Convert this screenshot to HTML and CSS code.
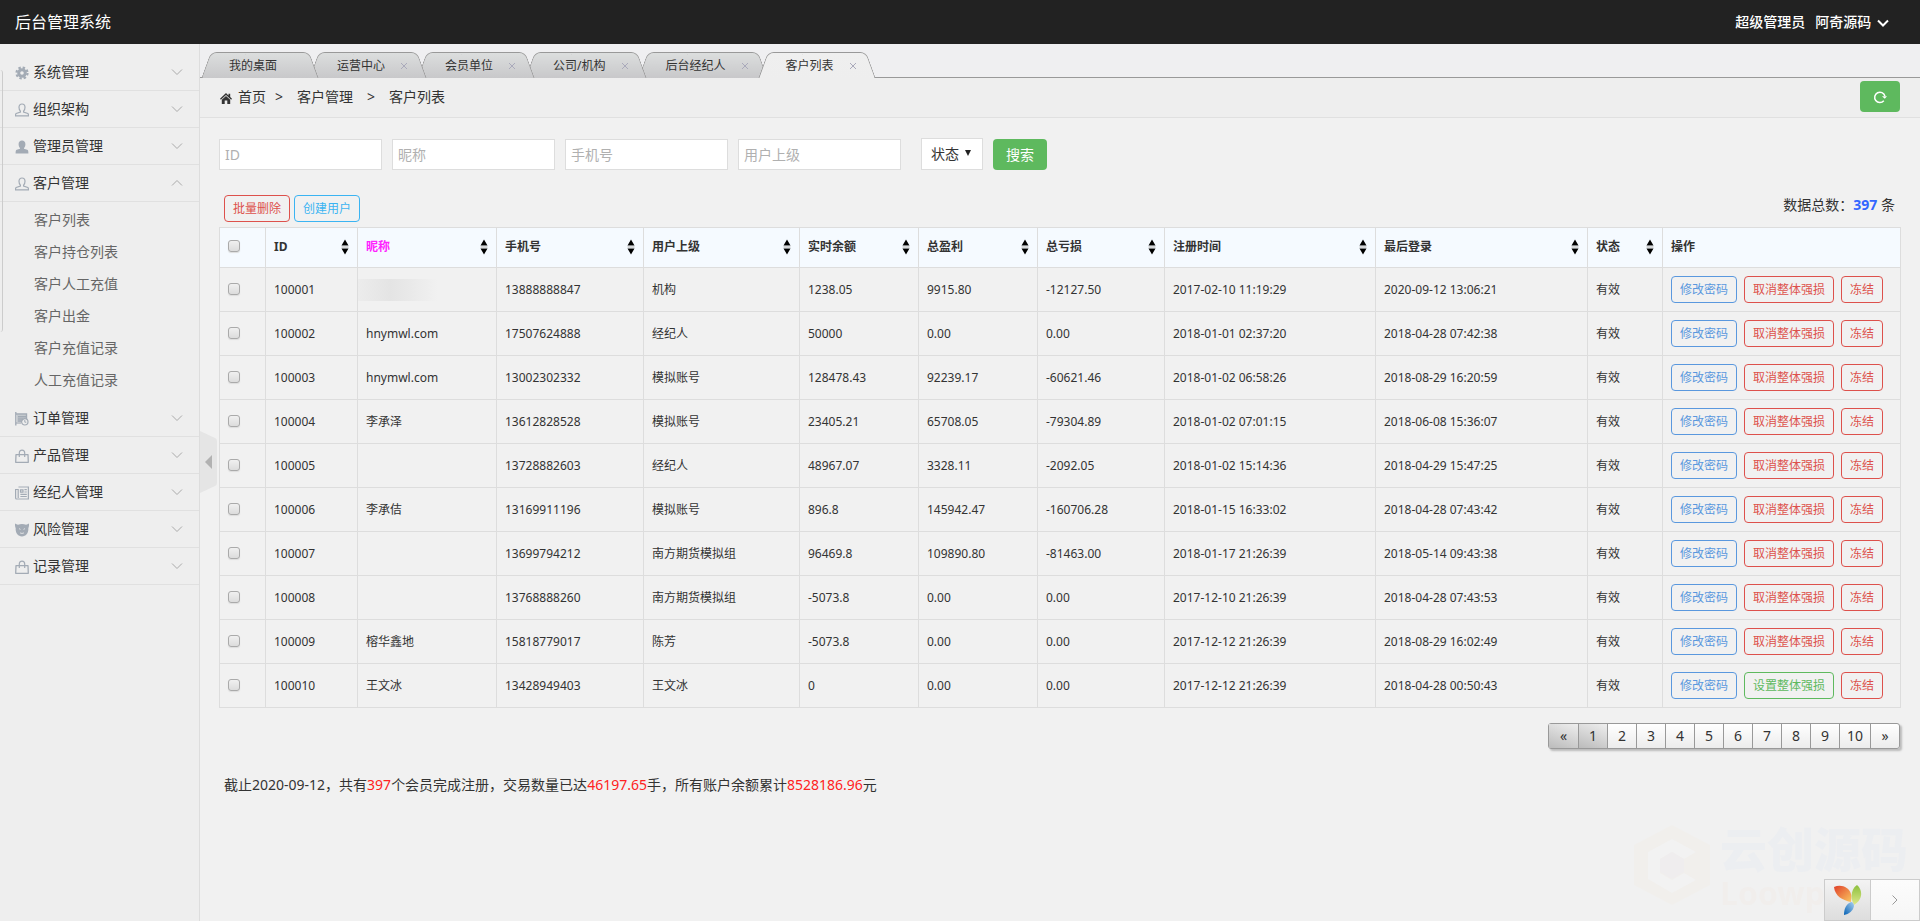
FILE: index.html
```html
<!DOCTYPE html>
<html lang="zh-CN">
<head>
<meta charset="utf-8">
<title>后台管理系统</title>
<link rel="stylesheet" href="styles.css">
</head>
<body>
<svg class="defs" aria-hidden="true">
  <defs>
    <linearGradient id="g-red" x1="0" y1="0" x2="1" y2="1"><stop offset="0" stop-color="#e0402a"/><stop offset="1" stop-color="#fbc860"/></linearGradient>
    <linearGradient id="g-green" x1="0" y1="0" x2="0" y2="1"><stop offset="0" stop-color="#8cc03c"/><stop offset="1" stop-color="#dfe88c"/></linearGradient>
    <linearGradient id="g-blue" x1="1" y1="0" x2="0" y2="1"><stop offset="0" stop-color="#a9d0f0"/><stop offset="1" stop-color="#0561b4"/></linearGradient>
  </defs>
  <symbol id="down" viewBox="0 0 12 8"><path d="M1 1.5 6 6.5 11 1.5" fill="none" stroke="currentColor"/></symbol>
  <symbol id="up" viewBox="0 0 12 8"><path d="M1 6.5 6 1.5 11 6.5" fill="none" stroke="currentColor"/></symbol>
  <symbol id="gear" viewBox="0 0 14 14"><circle cx="7" cy="7" r="3.3" fill="none" stroke="currentColor" stroke-width="3"/><circle cx="7" cy="7" r="5.5" fill="none" stroke="currentColor" stroke-width="2.2" stroke-dasharray="2.4 1.92"/></symbol>
  <symbol id="user-o" viewBox="0 0 14 14"><path d="M5.4 8.2C4.300 7 4 5.800 4 4.200 4 2.200 5.200 1 7 1s3 1.200 3 3.200c0 1.600-.3 2.800-1.400 4v.8l4.200 1.500c.5.300.7.900.7 2.300H.5c0-1.400.2-2 .7-2.300L5.400 9z" fill="none" stroke="currentColor" stroke-width="1.200"/></symbol>
  <symbol id="user" viewBox="0 0 14 14"><path d="M5 8C4 7 3.600 5.600 3.600 4 3.600 1.800 5 .5 7 .5s3.400 1.300 3.400 3.500c0 1.600-.4 3-1.400 4v.7l3.200 1.100c.9.300 1.200 1.200 1.200 3.700H.6c0-2.500.3-3.400 1.200-3.700L5 8.700z" fill="currentColor"/></symbol>
  <symbol id="order" viewBox="0 0 14 14"><path d="M.8 0v13.500M1 2h10.500v5M3 4.700h8M3 7h5M3 9h3.500" fill="none" stroke="currentColor" stroke-width="1.400"/><path d="M2 2.500h9V6L6 10H2z" fill="currentColor" opacity=".55"/><path d="M1 11h5" stroke="currentColor" stroke-width="1.200"/><circle cx="9.800" cy="9.800" r="3.200" fill="none" stroke="currentColor" stroke-width="1.200"/><path d="M9.800 8v2.200h1.500" fill="none" stroke="currentColor"/></symbol>
  <symbol id="bag" viewBox="0 0 14 14"><path d="M1 5.600h12L13.300 13.300H.7z" fill="none" stroke="currentColor" stroke-width="1.300" stroke-linejoin="round"/><path d="M4.300 8V4c0-3.900 5.400-3.900 5.400 0v4" fill="none" stroke="currentColor" stroke-width="1.200"/></symbol>
  <symbol id="news" viewBox="0 0 14 14"><path d="M3.500 1h9.900v12H1.600C.9 13 .6 12.600.6 12V3.500h2.600V12" fill="none" stroke="currentColor" stroke-width="1.200"/><path d="M5.500 3.800h2.500v2.400H5.500zM9.400 3.700h2.400M9.400 6h2.400M5.400 8.300h6.400M5.400 10.500h6.400" fill="none" stroke="currentColor" stroke-width="1.200"/></symbol>
  <symbol id="demon" viewBox="0 0 14 14"><path d="M0 .5c1 .3 2 1 3 1.200 2.500-.8 5.500-.8 8 0 1-.2 2-.9 3-1.200.2 2-.1 3.700-.7 4.800.5 4-2 8.200-6.300 8.200S.2 9.300.7 5.300C.1 4.200-.2 2.500 0 .5z" fill="currentColor"/><path d="M4 5.600 5.500 6.400M10 5.600 8.500 6.400M5 9.800c1.200.8 2.800.8 4 0" fill="none" stroke="#eee" stroke-width=".8"/></symbol>
  <symbol id="sort" viewBox="0 0 8 16"><path d="M4 .5 7.500 6.500h-7zM.5 9.500h7L4 15.500z" fill="#000"/><path d="M.5 7.300h7M.5 8.700h7" stroke="#bbb" stroke-width=".7"/></symbol>
  <symbol id="close" viewBox="0 0 8 8"><path d="m1 1 6 6M7 1 1 7" fill="none" stroke="currentColor"/></symbol>
</svg>

<header class="topbar">
  <h1 class="brand">后台管理系统</h1>
  <div class="account"><span>超级管理员</span><a href="#">阿奇源码 <svg class="chev"><use href="#down"/></svg></a></div>
</header>

<div class="shell">
  <aside class="sidebar">
    <div class="edge"></div>
    <nav class="menu">
      <button class="item" type="button"><svg class="ico"><use href="#gear"/></svg><span>系统管理</span><svg class="chev"><use href="#down"/></svg></button>
      <button class="item" type="button"><svg class="ico"><use href="#user-o"/></svg><span>组织架构</span><svg class="chev"><use href="#down"/></svg></button>
      <button class="item" type="button"><svg class="ico"><use href="#user"/></svg><span>管理员管理</span><svg class="chev"><use href="#down"/></svg></button>
      <button class="item" type="button"><svg class="ico"><use href="#user-o"/></svg><span>客户管理</span><svg class="chev"><use href="#up"/></svg></button>
      <div class="submenu">
        <a href="#">客户列表</a>
        <a href="#">客户持仓列表</a>
        <a href="#">客户人工充值</a>
        <a href="#">客户出金</a>
        <a href="#">客户充值记录</a>
        <a href="#">人工充值记录</a>
      </div>
      <button class="item" type="button"><svg class="ico"><use href="#order"/></svg><span>订单管理</span><svg class="chev"><use href="#down"/></svg></button>
      <button class="item" type="button"><svg class="ico"><use href="#bag"/></svg><span>产品管理</span><svg class="chev"><use href="#down"/></svg></button>
      <button class="item" type="button"><svg class="ico"><use href="#news"/></svg><span>经纪人管理</span><svg class="chev"><use href="#down"/></svg></button>
      <button class="item" type="button"><svg class="ico"><use href="#demon"/></svg><span>风险管理</span><svg class="chev"><use href="#down"/></svg></button>
      <button class="item" type="button"><svg class="ico"><use href="#bag"/></svg><span>记录管理</span><svg class="chev"><use href="#down"/></svg></button>
    </nav>
    <button class="collapse" type="button" aria-label="收起菜单"><svg viewBox="0 0 18 62"><path d="M0 0 15 7q2 1 2 3v42q0 2-2 3L0 62z" fill="#e5e5e5"/><path d="M12 24v14l-7-7z" fill="#b2b2b2"/></svg></button>
  </aside>

  <main class="main">
    <ul class="tabs">
      <li class="tab t1"><span>我的桌面</span></li>
      <li class="tab t2"><span>运营中心</span><svg class="x"><use href="#close"/></svg></li>
      <li class="tab t3"><span>会员单位</span><svg class="x"><use href="#close"/></svg></li>
      <li class="tab t4"><span>公司/机构</span><svg class="x"><use href="#close"/></svg></li>
      <li class="tab t5"><span>后台经纪人</span><svg class="x"><use href="#close"/></svg></li>
      <li class="tab active"><span>客户列表</span><svg class="x"><use href="#close"/></svg></li>
    </ul>

    <nav class="crumbs">
      <svg class="home" viewBox="0 0 12 12"><path d="M0 6.800 6 1l2.500 2.400V1.800h1.700v3.300L12 6.800l-.9.900L6 3 .9 7.700z" fill="#333"/><path d="M1.800 7.800 6 4l4.200 3.800V12H7.300V8.500H4.700V12H1.800z" fill="#333"/></svg>
      <a href="#">首页</a><span class="gt">&gt;</span><span>客户管理</span><span class="gt wide">&gt;</span><span>客户列表</span>
      <button class="refresh" type="button" aria-label="刷新"><svg viewBox="0 0 14 14"><path d="M10.800 10.800A5.200 5.200 0 1 1 11.900 6" fill="none" stroke="#fff" stroke-width="1.500"/><path d="M9 6.200h5L11.800 8.800z" fill="#fff"/></svg></button>
    </nav>

    <section class="content">
      <form class="search">
        <input type="text" placeholder="ID" aria-label="ID">
        <input type="text" placeholder="昵称" aria-label="昵称">
        <input type="text" placeholder="手机号" aria-label="手机号">
        <input type="text" placeholder="用户上级" aria-label="用户上级">
        <span class="pick"><select aria-label="状态"><option>状态</option></select><svg viewBox="0 0 6 6"><path d="M0 0h6L3 6z" fill="#222"/></svg></span>
        <button class="go" type="button">搜索</button>
      </form>

      <div class="bar">
        <button class="btn red" type="button">批量删除</button>
        <button class="btn sky" type="button">创建用户</button>
        <span class="total">数据总数：<strong>397</strong> 条</span>
      </div>

      <table class="grid">
        <colgroup><col class="c-chk"><col class="c-id"><col class="c-nick"><col class="c-tel"><col class="c-up"><col class="c-bal"><col class="c-bal"><col class="c-loss"><col class="c-time"><col class="c-last"><col class="c-st"><col class="c-op"></colgroup>
        <thead>
          <tr>
            <th><input type="checkbox" aria-label="全选"></th>
            <th><div>ID<svg><use href="#sort"/></svg></div></th>
            <th class="pink"><div>昵称<svg><use href="#sort"/></svg></div></th>
            <th><div>手机号<svg><use href="#sort"/></svg></div></th>
            <th><div>用户上级<svg><use href="#sort"/></svg></div></th>
            <th><div>实时余额<svg><use href="#sort"/></svg></div></th>
            <th><div>总盈利<svg><use href="#sort"/></svg></div></th>
            <th><div>总亏损<svg><use href="#sort"/></svg></div></th>
            <th><div>注册时间<svg><use href="#sort"/></svg></div></th>
            <th><div>最后登录<svg><use href="#sort"/></svg></div></th>
            <th><div>状态<svg><use href="#sort"/></svg></div></th>
            <th>操作</th>
          </tr>
        </thead>
        <tbody>
          <tr><td><input type="checkbox" aria-label="100001"></td><td>100001</td><td class="masked"><div></div></td><td>13888888847</td><td>机构</td><td>1238.05</td><td>9915.80</td><td>-12127.50</td><td>2017-02-10 11:19:29</td><td>2020-09-12 13:06:21</td><td>有效</td><td><div class="ops"><button class="btn blue" type="button">修改密码</button><button class="btn red" type="button">取消整体强损</button><button class="btn red" type="button">冻结</button></div></td></tr>
          <tr><td><input type="checkbox" aria-label="100002"></td><td>100002</td><td>hnymwl.com</td><td>17507624888</td><td>经纪人</td><td>50000</td><td>0.00</td><td>0.00</td><td>2018-01-01 02:37:20</td><td>2018-04-28 07:42:38</td><td>有效</td><td><div class="ops"><button class="btn blue" type="button">修改密码</button><button class="btn red" type="button">取消整体强损</button><button class="btn red" type="button">冻结</button></div></td></tr>
          <tr><td><input type="checkbox" aria-label="100003"></td><td>100003</td><td>hnymwl.com</td><td>13002302332</td><td>模拟账号</td><td>128478.43</td><td>92239.17</td><td>-60621.46</td><td>2018-01-02 06:58:26</td><td>2018-08-29 16:20:59</td><td>有效</td><td><div class="ops"><button class="btn blue" type="button">修改密码</button><button class="btn red" type="button">取消整体强损</button><button class="btn red" type="button">冻结</button></div></td></tr>
          <tr><td><input type="checkbox" aria-label="100004"></td><td>100004</td><td>李承泽</td><td>13612828528</td><td>模拟账号</td><td>23405.21</td><td>65708.05</td><td>-79304.89</td><td>2018-01-02 07:01:15</td><td>2018-06-08 15:36:07</td><td>有效</td><td><div class="ops"><button class="btn blue" type="button">修改密码</button><button class="btn red" type="button">取消整体强损</button><button class="btn red" type="button">冻结</button></div></td></tr>
          <tr><td><input type="checkbox" aria-label="100005"></td><td>100005</td><td></td><td>13728882603</td><td>经纪人</td><td>48967.07</td><td>3328.11</td><td>-2092.05</td><td>2018-01-02 15:14:36</td><td>2018-04-29 15:47:25</td><td>有效</td><td><div class="ops"><button class="btn blue" type="button">修改密码</button><button class="btn red" type="button">取消整体强损</button><button class="btn red" type="button">冻结</button></div></td></tr>
          <tr><td><input type="checkbox" aria-label="100006"></td><td>100006</td><td>李承佶</td><td>13169911196</td><td>模拟账号</td><td>896.8</td><td>145942.47</td><td>-160706.28</td><td>2018-01-15 16:33:02</td><td>2018-04-28 07:43:42</td><td>有效</td><td><div class="ops"><button class="btn blue" type="button">修改密码</button><button class="btn red" type="button">取消整体强损</button><button class="btn red" type="button">冻结</button></div></td></tr>
          <tr><td><input type="checkbox" aria-label="100007"></td><td>100007</td><td></td><td>13699794212</td><td>南方期货模拟组</td><td>96469.8</td><td>109890.80</td><td>-81463.00</td><td>2018-01-17 21:26:39</td><td>2018-05-14 09:43:38</td><td>有效</td><td><div class="ops"><button class="btn blue" type="button">修改密码</button><button class="btn red" type="button">取消整体强损</button><button class="btn red" type="button">冻结</button></div></td></tr>
          <tr><td><input type="checkbox" aria-label="100008"></td><td>100008</td><td></td><td>13768888260</td><td>南方期货模拟组</td><td>-5073.8</td><td>0.00</td><td>0.00</td><td>2017-12-10 21:26:39</td><td>2018-04-28 07:43:53</td><td>有效</td><td><div class="ops"><button class="btn blue" type="button">修改密码</button><button class="btn red" type="button">取消整体强损</button><button class="btn red" type="button">冻结</button></div></td></tr>
          <tr><td><input type="checkbox" aria-label="100009"></td><td>100009</td><td>榕华鑫地</td><td>15818779017</td><td>陈芳</td><td>-5073.8</td><td>0.00</td><td>0.00</td><td>2017-12-12 21:26:39</td><td>2018-08-29 16:02:49</td><td>有效</td><td><div class="ops"><button class="btn blue" type="button">修改密码</button><button class="btn red" type="button">取消整体强损</button><button class="btn red" type="button">冻结</button></div></td></tr>
          <tr><td><input type="checkbox" aria-label="100010"></td><td>100010</td><td>王文冰</td><td>13428949403</td><td>王文冰</td><td>0</td><td>0.00</td><td>0.00</td><td>2017-12-12 21:26:39</td><td>2018-04-28 00:50:43</td><td>有效</td><td><div class="ops"><button class="btn blue" type="button">修改密码</button><button class="btn green" type="button">设置整体强损</button><button class="btn red" type="button">冻结</button></div></td></tr>
        </tbody>
      </table>

      <nav class="pages" aria-label="分页">
        <a class="off" href="#">«</a><a class="off" href="#">1</a><a href="#">2</a><a href="#">3</a><a href="#">4</a><a href="#">5</a><a href="#">6</a><a href="#">7</a><a href="#">8</a><a href="#">9</a><a href="#">10</a><a href="#">»</a>
      </nav>

      <p class="summary">截止2020-09-12，共有<em>397</em>个会员完成注册，交易数量已达<em>46197.65</em>手，所有账户余额累计<em>8528186.96</em>元</p>
    </section>
  </main>
</div>

<div class="mark" aria-hidden="true">
  <svg viewBox="0 0 76 80"><path d="M38 0 76 20v40L38 80 0 60V20z" fill="#f1efec"/><path d="M38 14 62 27 50 34 38 27 26 34v14l12 7 12-7 12 7-24 13L14 54V27z" fill="#f2f2f2"/><path d="M38 27l12 7v13l-12 7-12-7V34z" fill="#efedee"/></svg>
  <div><b>云创源码</b><i>Loowp.com</i></div>
</div>

<div class="debug">
  <a class="logo" href="#" aria-label="Yii"><svg viewBox="0 0 28 30"><path d="M0 2C7-1 15 2 17 9c1 3 0 6 0 8C8 15 1 11 0 2z" fill="url(#g-red)"/><path d="M23 0c6 5 6 15-3 20-4-7-3-16 3-20z" fill="url(#g-green)"/><path d="M17 17c2 0 3 2 3 4-1 5-5 8-10 9 0-6 2-11 7-13z" fill="url(#g-blue)"/></svg></a>
  <button type="button" aria-label="展开"><svg viewBox="0 0 6 10"><path d="M.5.500 5 5 .5 9.500" fill="none" stroke="#999"/></svg></button>
</div>
</body>
</html>
```

FILE: styles.css
```css
* { box-sizing: border-box; }

body {
  margin: 0;
  min-height: 100vh;
  display: flex;
  flex-direction: column;
  background: #f1f1f1;
  color: #333;
  font: 14px/20px "Noto Sans", "Noto Sans CJK SC", sans-serif;
}

a { color: inherit; text-decoration: none; }
button { font: inherit; cursor: pointer; }
.defs { position: absolute; width: 0; height: 0; }
.chev { width: 12px; height: 8px; }

.topbar {
  height: 44px;
  padding: 0 31px 0 15px;
  display: flex;
  align-items: center;
  justify-content: space-between;
  background: #222;
  color: #fff;
}
.brand { margin: 0; font-size: 16px; font-weight: 400; }
.account { display: flex; gap: 10px; font-weight: 500; }
.account .chev { stroke-width: 2; margin-left: 2px; }

.shell { flex: 1; display: flex; }

.sidebar {
  position: relative;
  flex: 0 0 200px;
  padding-top: 10px;
  background: #eee;
  border-right: 1px solid #ddd;
}
.edge {
  position: absolute;
  left: 0;
  top: 26px;
  width: 3px;
  height: 262px;
  border-right: 1px solid #ccc;
  border-radius: 0 4px 4px 0;
}
.menu { display: flex; flex-direction: column; }
.item {
  height: 37px;
  padding: 0 16px 1px 15px;
  display: flex;
  align-items: center;
  border: 0;
  border-bottom: 1px solid #e0e0e0;
  background: none;
  color: #333;
  text-align: left;
}
.item span { flex: 1; padding-left: 4px; }
.item .ico { width: 14px; height: 14px; margin-top: 3px; color: #a3abb5; }
.item .chev { color: #aaa; }
.submenu { padding: 2px 0 4px; color: #666; }
.submenu a { display: block; padding-left: 34px; line-height: 32px; }

.collapse {
  position: absolute;
  left: 200px;
  top: 387px;
  width: 18px;
  height: 62px;
  padding: 0;
  border: 0;
  background: none;
}
.collapse svg { display: block; width: 18px; height: 62px; }

.main { flex: 1; min-width: 0; }

/* Trapezoid tabs: each half is a skewed pseudo-element */
.tabs {
  position: relative;
  margin: 0;
  padding: 8px 0 0 6px;
  height: 34px;
  display: flex;
  list-style: none;
  font-size: 12px;
  background: #efeff1;
  border-bottom: 1px solid #999;
}
.tab {
  position: relative;
  z-index: 1;
  height: 26px;
  padding: 2px 13px 0 23px;
  display: flex;
  align-items: center;
  gap: 15px;
  flex: none;
}
.tab::before, .tab::after {
  content: "";
  position: absolute;
  z-index: -1;
  top: 0;
  bottom: 0;
  border-top: 1px solid #999;
  background: linear-gradient(#dcdede, #c8c8ca);
}
.tab::before { left: 0; right: 40%; border-left: 1px solid #999; border-radius: 6px 0 0 0; transform: skewX(-20deg); }
.tab::after { left: 40%; right: 0; border-right: 1px solid #999; border-radius: 0 6px 0 0; transform: skewX(20deg); }
.tab .x { width: 8px; height: 8px; color: #aab; margin-right: 1px; }
.t1 { z-index: 6; padding-right: 37px; }
.t2 { z-index: 5; }
.t3 { z-index: 4; }
.t4 { z-index: 3; }
.t5 { z-index: 2; }
.tab.active { z-index: 7; }
.tab.active::before, .tab.active::after { background: linear-gradient(#efefef, #eee); }

.crumbs {
  height: 40px;
  padding: 0 20px 2px 19px;
  display: flex;
  align-items: center;
  background: #eee;
  border-bottom: 1px solid #e0e0e0;
}
.home { width: 12px; height: 12px; margin: 3px 6px 0 1px; }
.gt { margin: 0 14px 0 9px; }
.gt.wide { margin-left: 14px; }
.refresh {
  margin-left: auto;
  width: 40px;
  height: 31px;
  border: 0;
  border-radius: 4px;
  background: #5eb95e;
  display: grid;
  place-items: center;
}
.refresh svg { width: 14px; height: 14px; }

.content { padding: 20px 20px 20px 19px; }

.search { display: flex; align-items: flex-end; gap: 10px; }
.search input {
  width: 163px;
  height: 31px;
  padding: 0 5px 1px;
  border: 1px solid #ddd;
  background: #fff;
  font: inherit;
}
.search input::placeholder { color: #b0b0b0; }
.pick { position: relative; margin-left: 10px; }
.pick select {
  display: block;
  width: 62px;
  height: 32px;
  padding: 0 9px;
  border: 1px solid #ddd;
  border-radius: 0;
  background: #fff;
  color: #333;
  font: inherit;
  appearance: none;
}
.pick svg { position: absolute; right: 12px; top: 12px; width: 6px; height: 6px; pointer-events: none; }
.go { width: 54px; height: 31px; padding: 0; border: 0; border-radius: 4px; background: #5eb95e; color: #fff; }

.bar { display: flex; align-items: flex-start; gap: 4px; padding: 25px 5px 5px; }
.total { margin-left: auto; }
.total strong { color: #36f; }

.btn {
  height: 27px;
  padding: 0 8px;
  border: 1px solid;
  border-radius: 4px;
  background: none;
  font-size: 12px;
  line-height: 18px;
}
.red { color: #dd514c; }
.sky { color: #3bb4f2; }
.blue { color: #5a98de; }
.green { color: #5eb95e; }

.grid {
  width: 100%;
  table-layout: fixed;
  border-collapse: collapse;
  font-size: 12px;
  line-height: 20px;
}
.c-chk { width: 46px; }
.c-id { width: 92px; }
.c-nick { width: 139px; }
.c-tel { width: 147px; }
.c-up { width: 156px; }
.c-bal { width: 119px; }
.c-loss { width: 127px; }
.c-time { width: 211px; }
.c-last { width: 212px; }
.c-st { width: 75px; }
.c-op { width: 238px; }
.grid th, .grid td {
  height: 44px;
  padding: 0 8px;
  border: 1px solid #ddd;
  text-align: left;
  white-space: nowrap;
}
.grid th { height: 40px; padding-bottom: 2px; background: #f5faff; font-weight: 700; }
.grid th div { display: flex; align-items: center; justify-content: space-between; }
.grid th svg { width: 8px; height: 16px; }
.grid .pink { color: #f2f; }
.grid input {
  appearance: none;
  display: block;
  width: 12px;
  height: 12px;
  margin: 0 0 2px;
  border: 1px solid #aaa;
  border-radius: 3px;
  background: linear-gradient(#f0f0f0, #dcdcdc);
  box-shadow: 0 1px 1px #ddd;
}
.grid .masked { padding: 0; }
.masked div { width: 80px; height: 22px; background: linear-gradient(90deg, #ececec, #e4e4e4 40%, #e8e8e8 60%, #f1f1f1); }
.ops { display: flex; gap: 7px; }

.pages {
  width: max-content;
  margin: 15px 0 0 auto;
  display: flex;
  border: 1px solid #999;
  border-radius: 3px;
  background: linear-gradient(#fff, #ececec);
  box-shadow: 2px 2px 2px #bbb;
  line-height: 24px;
}
.pages a { min-width: 29px; padding: 0 7px; text-align: center; border-left: 1px solid #999; }
.pages a:first-child { border-left: 0; }
.pages .off { background: linear-gradient(20deg, #bbb, #eee); }

.summary { margin: 26px 5px 0; }
.summary em { color: #f22; font-style: normal; }

.mark {
  position: fixed;
  right: 12px;
  bottom: 12px;
  display: flex;
  align-items: center;
  gap: 10px;
}
.mark svg { width: 76px; height: 80px; }
.mark div { display: flex; flex-direction: column; }
.mark b { font-size: 47px; line-height: 56px; font-weight: 900; color: #eceef1; }
.mark i { font: 700 32px/32px "Noto Sans", sans-serif; color: #f1eeec; }

.debug {
  position: fixed;
  right: 0;
  bottom: 0;
  width: 96px;
  height: 42px;
  display: flex;
  border: 1px solid #ccc;
}
.logo { width: 46px; display: grid; place-items: center; background: linear-gradient(#f3f3f3, #ddd); border-right: 1px solid #ccc; }
.logo svg { width: 28px; height: 30px; }
.debug button { flex: 1; padding: 0; border: 0; background: linear-gradient(#fcfcfc, #f6f6f6); display: grid; place-items: center; }
.debug button svg { width: 6px; height: 10px; }
```
